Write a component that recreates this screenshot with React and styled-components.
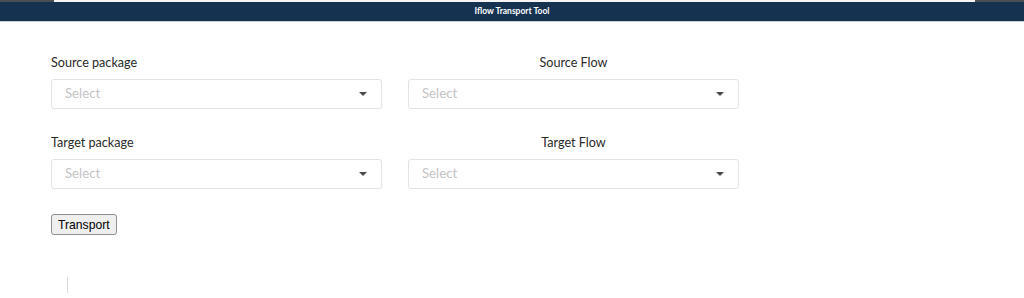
import React from "react";
import styled, { createGlobalStyle } from "styled-components";

const Global = createGlobalStyle`
  html, body { margin: 0; padding: 0; background: #fff; }
  body { font-family: Lato, "Open Sans", sans-serif; }
`;

const Header = styled.header`
  background: #163251;
  border-bottom: 1px solid #c9cdd2;
`;

const TopStrip = styled.div`
  height: 2px;
  background: #4b4f55;
  display: flex;
`;

const TopRule = styled.div`
  flex: 1;
  margin: 0 49px 0 54px;
  background: #f4f4f4;
`;

const Title = styled.h1`
  margin: 0;
  height: 19px;
  line-height: 19px;
  text-align: center;
  color: #fff;
  font-family: Lato, sans-serif;
  font-weight: 700;
  font-size: 8.5px;
`;

const Main = styled.main`
  padding: 33px 51px 0;
`;

const FormGrid = styled.div`
  display: grid;
  grid-template-columns: 331px 331px;
  column-gap: 26px;
  row-gap: 26px;
`;

const Field = styled.div`
  display: flex;
  flex-direction: column;
`;

const Label = styled.label`
  font-family: Lato, sans-serif;
  font-size: 12.6px;
  line-height: 16px;
  color: #2a2a2a;
  margin-bottom: 8px;
  text-align: ${(p) => p.$align || "left"};
`;

const SelectBox = styled.div`
  box-sizing: border-box;
  height: 30px;
  border: 1px solid #e3e3e3;
  border-radius: 3px;
  display: flex;
  align-items: center;
  justify-content: space-between;
  padding: 0 14px 0 13px;
  background: #fff;
`;

const Placeholder = styled.span`
  font-family: Lato, sans-serif;
  font-size: 13.2px;
  line-height: 16px;
  margin-top: -2px;
  color: #c3c3c3;
`;

const Caret = styled.span`
  width: 0;
  height: 0;
  margin-top: -1px;
  border-left: 4px solid transparent;
  border-right: 4px solid transparent;
  border-top: 4px solid #4a4a4a;
`;

const Button = styled.button`
  margin-top: 25px;
  box-sizing: border-box;
  height: 21px;
  padding: 0 6px;
  font-family: "Liberation Sans", Arial, sans-serif;
  font-size: 12.2px;
  color: #000;
  background: #efefef;
  border: 1px solid #8f8f8f;
  border-radius: 3px;
`;

const Output = styled.div`
  margin: 42px 0 0 16px;
  width: 0;
  height: 16px;
  border-left: 1px solid #d8d8d8;
`;

function Select() {
  return (
    <SelectBox>
      <Placeholder>Select</Placeholder>
      <Caret />
    </SelectBox>
  );
}

export default function App() {
  return (
    <>
      <Global />
      <Header>
        <TopStrip>
          <TopRule />
        </TopStrip>
        <Title>Iflow Transport Tool</Title>
      </Header>
      <Main>
        <FormGrid>
          <Field>
            <Label>Source package</Label>
            <Select />
          </Field>
          <Field>
            <Label $align="center">Source Flow</Label>
            <Select />
          </Field>
          <Field>
            <Label>Target package</Label>
            <Select />
          </Field>
          <Field>
            <Label $align="center">Target Flow</Label>
            <Select />
          </Field>
        </FormGrid>
        <Button>Transport</Button>
        <Output />
      </Main>
    </>
  );
}
